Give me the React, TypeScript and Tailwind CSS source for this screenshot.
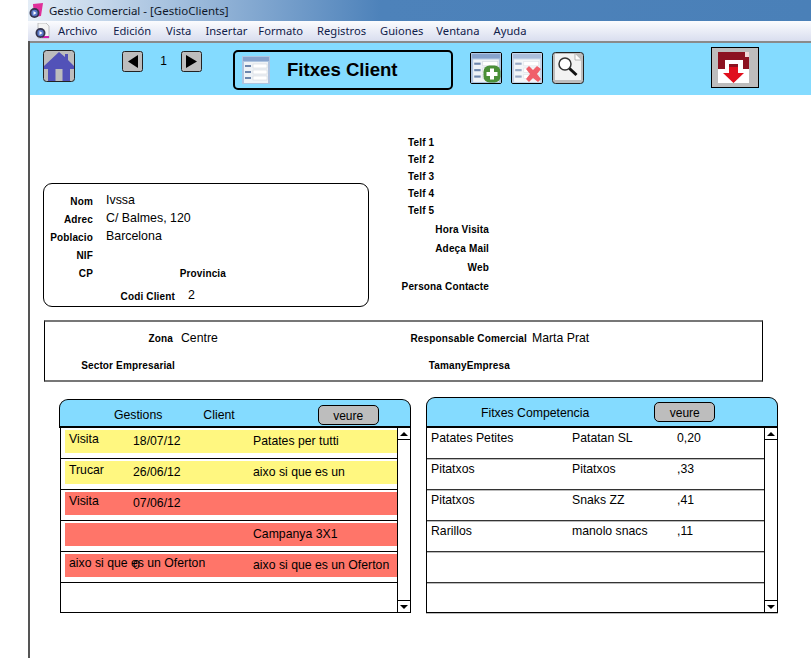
const menus: [string, number][] = [
  ["Archivo", 0],
  ["Edición", 16],
  ["Vista", 15],
  ["Insertar", 14],
  ["Formato", 11],
  ["Registros", 14],
  ["Guiones", 14],
  ["Ventana", 13],
  ["Ayuda", 14],
];

const gestions = [
  { a: "Visita", b: "18/07/12", c: "Patates per tutti", color: "bg-[#fff780]" },
  { a: "Trucar", b: "26/06/12", c: "aixo si que es un", color: "bg-[#fff780]" },
  { a: "Visita", b: "07/06/12", c: "", color: "bg-[#ff7569]" },
  { a: "", b: "", c: "Campanya 3X1", color: "bg-[#ff7569]" },
  { a: "aixo si que es un Oferton", b: "0", c: "aixo si que es un Oferton", color: "bg-[#ff7569]" },
];

const competencia = [
  ["Patates Petites", "Patatan SL", "0,20"],
  ["Pitatxos", "Pitatxos", ",33"],
  ["Pitatxos", "Snaks ZZ", ",41"],
  ["Rarillos", "manolo snacs", ",11"],
  ["", "", ""],
  ["", "", ""],
];

function AppIcon({ doc }: { doc?: boolean }) {
  return (
    <svg width="15" height="16" viewBox="0 0 15 16" className="shrink-0">
      {doc ? (
        <path d="M3 0h8l3 3v12H3z" fill="#f4f4f4" stroke="#aaa" strokeWidth="0.7" />
      ) : (
        <path d="M4 1l10-1-2 13-7 1z" fill="#e0309a" />
      )}
      {doc && <rect x="7" y="13" width="7" height="2" fill="#d020b0" />}
      <circle cx="5.5" cy="10" r="5" fill="#33334d" />
      <circle cx="5.5" cy="10" r="3.2" fill="#5a78c8" />
      <path d="M4.5 8l3 2-3 2z" fill="#fff" />
    </svg>
  );
}

function HomeIcon() {
  return (
    <svg width="32" height="32" viewBox="0 0 32 32" className="shrink-0">
      <rect x="0.5" y="0.5" width="31" height="31" rx="3" fill="#bdbdbd" stroke="#222" />
      <path d="M16 2L22 7V4h3v6l6 6v3h-4v12H5V19H1v-3z" fill="#5252b8" />
      <rect x="12.5" y="19" width="7" height="12" fill="#bdbdbd" />
    </svg>
  );
}

function ArrowButton({ right }: { right?: boolean }) {
  return (
    <svg width="21" height="21" viewBox="0 0 21 21" className="shrink-0">
      <rect x="0.5" y="0.5" width="20" height="20" rx="2" fill="#bdbdbd" stroke="#222" />
      <path d={right ? "M5 4l11 6.5L5 17z" : "M16 4L6 10.5 16 17z"} fill="#000" />
    </svg>
  );
}

function FormIcon({ size = 32 }: { size?: number }) {
  return (
    <svg width={size} height={size} viewBox="0 0 28 28" className="shrink-0">
      <rect width="28" height="28" fill="#aec4e0" />
      <rect x="1" y="1" width="26" height="4" fill="#86a2cc" />
      <rect x="2" y="6" width="24" height="21" fill="#eef2f6" />
      <rect x="3" y="9" width="6" height="2" fill="#6d86ad" />
      <rect x="3" y="15" width="6" height="2" fill="#6d86ad" />
      <rect x="3" y="21" width="6" height="2" fill="#6d86ad" />
      <rect x="11" y="8" width="14" height="4" fill="#fff" stroke="#c9cfd6" strokeWidth="0.5" />
      <rect x="11" y="14" width="14" height="4" fill="#fff" stroke="#c9cfd6" strokeWidth="0.5" />
      <rect x="11" y="20" width="14" height="4" fill="#fff" stroke="#c9cfd6" strokeWidth="0.5" />
    </svg>
  );
}

function AddIcon() {
  return (
    <div className="relative w-[32px] h-[32px] shrink-0 border border-black rounded-[2px] overflow-hidden bg-white">
      <FormIcon size={30} />
      <svg width="18" height="18" viewBox="0 0 18 18" className="absolute right-0 bottom-0">
        <rect x="0.5" y="0.5" width="17" height="17" rx="6" fill="#4a8f38" />
        <path d="M7 3.5h4V7h3.5v4H11v3.5H7V11H3.5V7H7z" fill="#fff" />
      </svg>
    </div>
  );
}

function DeleteIcon() {
  return (
    <div className="relative w-[32px] h-[32px] shrink-0 border border-black rounded-[2px] overflow-hidden bg-white">
      <div className="opacity-70">
        <FormIcon size={30} />
      </div>
      <svg width="18" height="18" viewBox="0 0 18 18" className="absolute right-0 bottom-0">
        <path d="M2 4l3-3 4 4 4-4 4 3-4 5 4 5-3 3-5-4-4 4-3-3 4-5z" fill="#f0606a" />
      </svg>
    </div>
  );
}

function SearchIcon() {
  return (
    <svg width="32" height="32" viewBox="0 0 32 32" className="shrink-0">
      <rect x="0.5" y="0.5" width="31" height="31" rx="3" fill="#bdbdbd" stroke="#222" />
      <path d="M3 2h20l6 6v20H3z" fill="#f2f2f2" />
      <path d="M23 2v6h6" fill="#fff" stroke="#999" strokeWidth="0.7" />
      <circle cx="13" cy="12" r="6" fill="#fff" stroke="#333" strokeWidth="1.5" />
      <path d="M17.5 16.5l7 6.5" stroke="#111" strokeWidth="3" />
    </svg>
  );
}

function ExitIcon() {
  return (
    <svg width="48" height="41" viewBox="0 0 48 41" className="shrink-0">
      <rect x="0.5" y="0.5" width="47" height="40" fill="#bdbdbd" stroke="#000" />
      <rect x="7" y="5" width="31" height="31" fill="#fff" />
      <path d="M7 5h27v5h4v12h-6V13H14v9H7z" fill="#8c1220" />
      <rect x="34" y="5" width="4" height="5" fill="#f3d8d8" />
      <path d="M18 17h9v9h6L22.500 36 12 26h6z" fill="#e0101e" />
      <path d="M18 17h9v3h-9z" fill="#8c1220" />
    </svg>
  );
}

function Scrollbar() {
  return (
    <div className="w-[13px] shrink-0 border-l border-black flex flex-col justify-between bg-white">
      <div className="h-[12px] border-b border-black flex items-center justify-center">
        <div className="w-0 h-0 border-x-[4px] border-x-transparent border-b-[4px] border-b-black" />
      </div>
      <div className="h-[12px] border-t border-black flex items-center justify-center">
        <div className="w-0 h-0 border-x-[4px] border-x-transparent border-t-[4px] border-t-black" />
      </div>
    </div>
  );
}

function VeureButton() {
  return (
    <div className="w-[61px] h-[20px] rounded-[5px] border border-black bg-[#bdbdbd] flex items-center justify-center text-[12px] pt-[1px] shrink-0">
      veure
    </div>
  );
}

function Label({ w, children }: { w: number; children: React.ReactNode }) {
  return (
    <div className="text-right font-bold text-[10px] tracking-[0.15px] text-black whitespace-nowrap shrink-0" style={{ width: w }}>
      {children}
    </div>
  );
}

function CardRow({ label, value, h = 18 }: { label: string; value?: string; h?: number }) {
  return (
    <div className="flex items-center gap-[13px]" style={{ height: h }}>
      <Label w={49}>{label}</Label>
      <span className="text-[12.4px] relative -top-[1px]">{value}</span>
    </div>
  );
}

const telfs = ["Telf 1", "Telf 2", "Telf 3", "Telf 4", "Telf 5"];
const extras = ["Hora Visita", "Adeça Mail", "Web", "Persona Contacte"];

export default function App() {
  return (
    <div className="w-[811px] h-[658px] overflow-hidden bg-white flex text-black font-['Liberation_Sans',Arial,sans-serif]">
      <div className="w-[28px] shrink-0" />
      <div className="flex-1 min-w-0 border-l-2 border-[#555] flex flex-col">
        {/* window title + menu */}
        <div className="h-[21px] -ml-[2px] flex items-center gap-[5px] pl-[1px] bg-gradient-to-r from-[#e4edf6] via-[#4d82ba] via-45% to-[#4a80b8] text-[11.5px] text-[#10182a] font-['Noto_Sans',sans-serif]">
          <AppIcon />
          <span>Gestio Comercial - [GestioClients]</span>
        </div>
        <div className="h-[20px] -ml-[2px] pl-[7px] flex items-center bg-gradient-to-b from-[#fbfcfe] to-[#d9deef] text-[11.2px] text-[#10204a] font-['Noto_Sans',sans-serif]">
          <AppIcon doc />
          <div className="flex ml-[8px] pt-[1px]">
            {menus.map(([m, gap]) => (
              <span key={m} style={{ marginLeft: gap }}>{m}</span>
            ))}
          </div>
        </div>
        <div className="h-[2px] bg-[#8a8a8a]" />

        {/* toolbar */}
        <div className="h-[52px] bg-[#84dbff] flex items-start pt-[7px] pl-[13px]">
          <HomeIcon />
          <div className="ml-[47px] mt-[1px]"><ArrowButton /></div>
          <span className="w-[38px] pl-[3px] text-center text-[12px] mt-[2px]">1</span>
          <div className="mt-[1px]"><ArrowButton right /></div>
          <div className="ml-[31px] w-[220px] h-[40px] border-2 border-black rounded-[5px] flex items-center pl-[7px]">
            <FormIcon size={28} />
            <span className="ml-[17px] font-bold text-[18.6px]">Fitxes Client</span>
          </div>
          <div className="ml-[17px] mt-[2px] flex gap-[9px]">
            <AddIcon />
            <DeleteIcon />
            <SearchIcon />
          </div>
          <div className="ml-[127px] -mt-[3px]"><ExitIcon /></div>
        </div>

        {/* client data */}
        <div className="flex h-[212px]">
          <div className="ml-[13px] mt-[88px] w-[326px] h-[124px] border border-black rounded-[9px] pt-[8px] pl-0 shrink-0">
            <CardRow label="Nom" value="Ivssa" />
            <CardRow label="Adrec" value="C/ Balmes, 120" />
            <CardRow label="Poblacio" value="Barcelona" />
            <CardRow label="NIF" />
            <div className="flex items-center h-[19px]">
              <Label w={49}>CP</Label>
              <Label w={133}>Provincia</Label>
            </div>
            <div className="flex items-center h-[18px] mt-[4px]">
              <Label w={131}>Codi Client</Label>
              <span className="ml-[13px] text-[12.4px] relative -top-[1px]">2</span>
            </div>
          </div>
          <div className="ml-[33px] mt-[39px] w-[87px] shrink-0">
            {telfs.map((t) => (
              <div key={t} className="h-[17px] pl-[6px] flex items-center font-bold text-[10px] tracking-[0.15px]">
                {t}
              </div>
            ))}
            <div className="mt-[1px]">
              {extras.map((t) => (
                <div key={t} className="h-[19px] flex items-center justify-end font-bold text-[10px] tracking-[0.15px] whitespace-nowrap">
                  {t}
                </div>
              ))}
            </div>
          </div>
        </div>

        {/* zona */}
        <div className="ml-[14px] mt-[13px] w-[719px] h-[62px] border-x border-x-black border-y-2 border-y-[#777] pt-[8px]">
          <div className="flex items-center h-[16px]">
            <Label w={128}>Zona</Label>
            <span className="w-[237px] pl-[8px] text-[12.25px] shrink-0">Centre</span>
            <Label w={117}>Responsable Comercial</Label>
            <span className="ml-[5px] text-[12.25px]">Marta Prat</span>
          </div>
          <div className="flex items-center h-[16px] mt-[11px]">
            <Label w={130}>Sector Empresarial</Label>
            <div className="w-[216px] shrink-0" />
            <Label w={119}>TamanyEmpresa</Label>
          </div>
        </div>

        {/* lists */}
        <div className="flex items-start mt-[15px] ml-[29px] gap-[15px] text-[12.25px]">
          <div className="w-[352px] mt-[2px] shrink-0">
            <div className="h-[29px] bg-[#84dbff] border border-black border-b-2 rounded-t-[9px] flex items-start">
              <span className="ml-[54px] mt-[6px]">Gestions</span>
              <span className="ml-[41px] mt-[6px]">Client</span>
              <div className="ml-[83px] mt-[5px]"><VeureButton /></div>
            </div>
            <div className="flex h-[185px] ml-[1px] border-x border-b border-black">
              <div className="flex-1 min-w-0">
                {gestions.map((g) => (
                  <div key={g.c + g.a + g.b} className="h-[31px] border-b border-black pt-[2px] pl-[4px]">
                    <div className={`h-[23px] w-[332px] relative flex ${g.color}`}>
                      <span className="absolute left-[4px] top-0 whitespace-nowrap">{g.a}</span>
                      <span className="absolute left-[68px] top-[2px] whitespace-nowrap">{g.b}</span>
                      <span className="absolute left-[188px] top-[2px] whitespace-nowrap">{g.c}</span>
                    </div>
                  </div>
                ))}
              </div>
              <Scrollbar />
            </div>
          </div>
          <div className="w-[352px] shrink-0">
            <div className="h-[31px] bg-[#84dbff] border border-black border-b-2 rounded-t-[9px] flex items-start">
              <span className="ml-[54px] mt-[6px]">Fitxes Competencia</span>
              <div className="ml-[65px] mt-[4px]"><VeureButton /></div>
            </div>
            <div className="flex h-[185px] border-x border-b border-black shadow-[0_1px_0_#bbb]">
              <div className="flex-1 min-w-0">
                {competencia.map((r, i) => (
                  <div key={i} className="h-[31px] border-b border-[#333] shadow-[0_1px_0_#bbb] last:border-b-0 last:shadow-none flex pt-[1px] pl-[4px]">
                    <span className="w-[141px]">{r[0]}</span>
                    <span className="w-[105px]">{r[1]}</span>
                    <span>{r[2]}</span>
                  </div>
                ))}
              </div>
              <Scrollbar />
            </div>
          </div>
        </div>
      </div>
    </div>
  );
}
